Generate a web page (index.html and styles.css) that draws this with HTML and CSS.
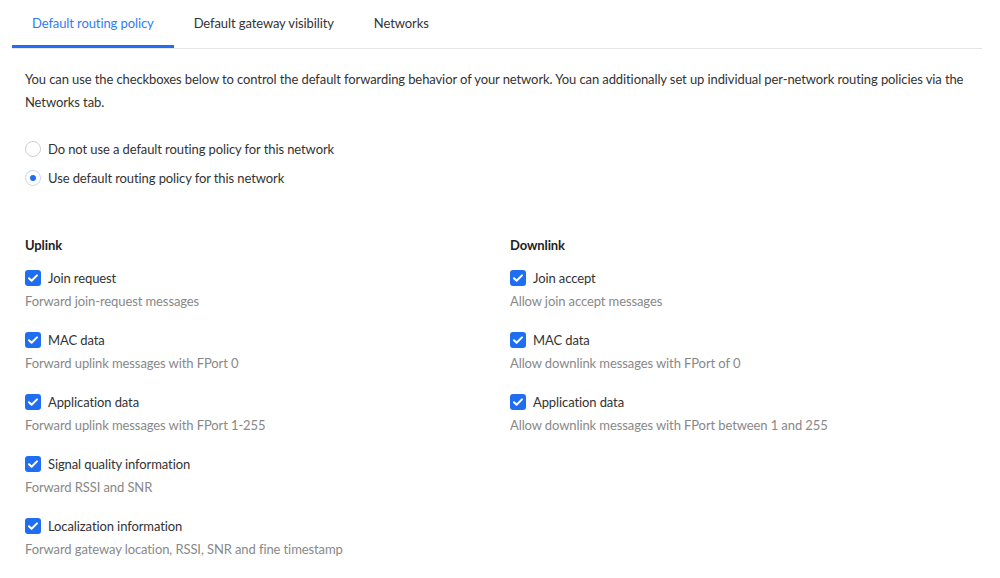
FILE: index.html
```html
<!DOCTYPE html>
<html>
<head>
<meta charset="utf-8">
<link rel="stylesheet" href="styles.css">
</head>
<body>
<div class="page">
  <div class="tabs">
    <div class="tab active">Default routing policy</div>
    <div class="tab">Default gateway visibility</div>
    <div class="tab">Networks</div>
  </div>
  <div class="content">
    <p class="intro">You can use the checkboxes below to control the default forwarding behavior of your network. You can additionally set up individual per-network routing policies via the Networks tab.</p>
    <div class="radios">
      <label class="radio-row"><span class="radio"></span>Do not use a default routing policy for this network</label>
      <label class="radio-row"><span class="radio checked"></span>Use default routing policy for this network</label>
    </div>
    <div class="columns">
      <div class="col">
        <div class="col-title">Uplink</div>
        <div class="item">
          <div class="check-row"><span class="box"><svg viewBox="0 0 16 16"><path d="M4 8.2l2.6 2.6L12 5.4" /></svg></span>Join request</div>
          <div class="desc">Forward join-request messages</div>
        </div>
        <div class="item">
          <div class="check-row"><span class="box"><svg viewBox="0 0 16 16"><path d="M4 8.2l2.6 2.6L12 5.4" /></svg></span>MAC data</div>
          <div class="desc">Forward uplink messages with FPort 0</div>
        </div>
        <div class="item">
          <div class="check-row"><span class="box"><svg viewBox="0 0 16 16"><path d="M4 8.2l2.6 2.6L12 5.4" /></svg></span>Application data</div>
          <div class="desc">Forward uplink messages with FPort 1-255</div>
        </div>
        <div class="item">
          <div class="check-row"><span class="box"><svg viewBox="0 0 16 16"><path d="M4 8.2l2.6 2.6L12 5.4" /></svg></span>Signal quality information</div>
          <div class="desc">Forward RSSI and SNR</div>
        </div>
        <div class="item">
          <div class="check-row"><span class="box"><svg viewBox="0 0 16 16"><path d="M4 8.2l2.6 2.6L12 5.4" /></svg></span>Localization information</div>
          <div class="desc">Forward gateway location, RSSI, SNR and fine timestamp</div>
        </div>
      </div>
      <div class="col">
        <div class="col-title">Downlink</div>
        <div class="item">
          <div class="check-row"><span class="box"><svg viewBox="0 0 16 16"><path d="M4 8.2l2.6 2.6L12 5.4" /></svg></span>Join accept</div>
          <div class="desc">Allow join accept messages</div>
        </div>
        <div class="item">
          <div class="check-row"><span class="box"><svg viewBox="0 0 16 16"><path d="M4 8.2l2.6 2.6L12 5.4" /></svg></span>MAC data</div>
          <div class="desc">Allow downlink messages with FPort of 0</div>
        </div>
        <div class="item">
          <div class="check-row"><span class="box"><svg viewBox="0 0 16 16"><path d="M4 8.2l2.6 2.6L12 5.4" /></svg></span>Application data</div>
          <div class="desc">Allow downlink messages with FPort between 1 and 255</div>
        </div>
      </div>
    </div>
  </div>
</div>
</body>
</html>
```

FILE: styles.css
```css
* { box-sizing: border-box; }
body {
  margin: 0;
  font-family: Lato, "Liberation Sans", sans-serif;
  font-size: 13px;
  letter-spacing: -0.1px;
  color: #333;
  background: #fff;
}
.page { padding: 0 18px 0 12px; }
.tabs {
  display: flex;
  border-bottom: 1px solid #e6e6e6;
}
.tab {
  padding: 0 20px;
  height: 48px;
  line-height: 47px;
  border-bottom: 3px solid transparent;
  color: #333;
}
.tab.active {
  color: #2f7cf6;
  border-bottom-color: #1f6ef2;
}
.content { padding: 0 13px; }
.intro {
  margin: 19px 0 0;
  line-height: 23px;
}
.radios {
  margin-top: 20px;
  display: flex;
  flex-direction: column;
}
.radio-row {
  display: flex;
  align-items: center;
  height: 29px;
  gap: 7px;
}
.radio {
  width: 16px;
  height: 16px;
  border-radius: 50%;
  border: 1px solid #cfcfcf;
  display: flex;
  align-items: center;
  justify-content: center;
}
.radio.checked { border-color: #c9d9f7; }
.radio.checked::after {
  content: "";
  width: 6px;
  height: 6px;
  border-radius: 50%;
  background: #1f6ef2;
}
.columns {
  margin-top: 43px;
  display: grid;
  grid-template-columns: 1fr 1fr;
  column-gap: 26px;
}
.col-title {
  font-weight: 700;
  color: #222;
  line-height: 20px;
  margin-bottom: 12px;
}
.item { margin-bottom: 17px; }
.check-row {
  display: flex;
  align-items: center;
  gap: 7px;
  line-height: 22px;
  color: #333;
}
.box {
  width: 16px;
  height: 16px;
  border-radius: 3px;
  background: #1f6ef2;
  display: flex;
}
.box svg {
  width: 16px;
  height: 16px;
  fill: none;
  stroke: #fff;
  stroke-width: 2;
  stroke-linecap: round;
  stroke-linejoin: round;
}
.desc {
  margin-top: 1px;
  line-height: 22px;
  color: #888;
}
```
